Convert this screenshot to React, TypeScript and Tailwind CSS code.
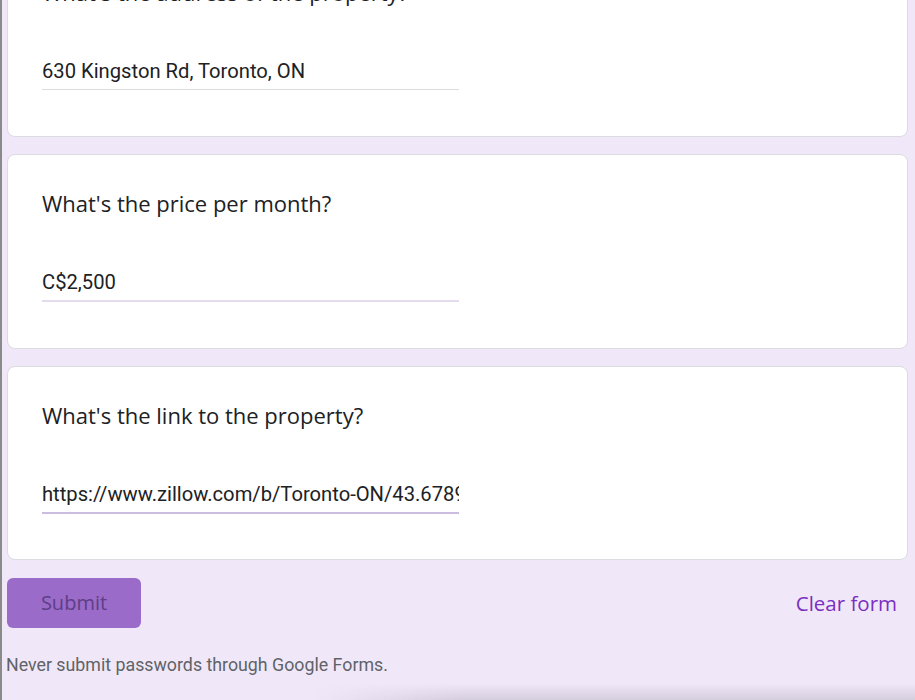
const questionFont = { fontFamily: '"Open Sans", "Noto Sans", sans-serif' };

type Question = {
  title: string;
  answer: string;
  lineClass: string;
  bottom: string;
};

const questions: Question[] = [
  {
    title: "What's the address of the property?",
    answer: "630 Kingston Rd, Toronto, ON",
    lineClass: "border-b border-[#dadce0]",
    bottom: "pb-[46px]",
  },
  {
    title: "What's the price per month?",
    answer: "C$2,500",
    lineClass: "border-b-2 border-[#e4dcee]",
    bottom: "pb-[46px]",
  },
  {
    title: "What's the link to the property?",
    answer: "https://www.zillow.com/b/Toronto-ON/43.67891,-79.29145_ll/",
    lineClass: "border-b-2 border-[#cbbde0]",
    bottom: "pb-[45px]",
  },
];

function QuestionCard({ q, first }: { q: Question; first?: boolean }) {
  return (
    <div
      className={`rounded-lg border border-[#dadce0] bg-white px-[34px] pt-[34px] ${q.bottom} ${
        first ? "-mt-[57px]" : ""
      }`}
    >
      <div className="text-[22px] leading-[28px] text-[#202124]" style={questionFont}>
        {q.title}
      </div>
      <div className={`mt-[53px] w-[417px] pb-[6px] ${q.lineClass}`}>
        <div className="overflow-hidden whitespace-nowrap font-['Roboto'] text-[20.2px] leading-[24px] text-[#202124]">
          {q.answer}
        </div>
      </div>
    </div>
  );
}

export default function App() {
  return (
    <div className="relative h-[700px] w-[915px] overflow-hidden border-l-2 border-[#8a8a8a] bg-[#f0e8f8] pl-[5px] pr-[7px] font-['Roboto']">
      <div className="flex flex-col gap-[17px]">
        {questions.map((q, i) => (
          <QuestionCard key={q.title} q={q} first={i === 0} />
        ))}
      </div>

      <div className="mt-[18px] flex items-center justify-between">
        <button
          className="h-[50px] w-[134px] rounded-md bg-[#9a6bc9] text-[20px] font-medium text-[#5e3e85]"
          style={questionFont}
        >
          Submit
        </button>
        <button
          className="mr-[11px] text-[20.5px] font-medium text-[#7a2fc0]"
          style={questionFont}
        >
          Clear form
        </button>
      </div>

      <div className="-ml-[1px] mt-[25px] text-[17.8px] leading-[24px] text-[#5f6368]">
        Never submit passwords through Google Forms.
      </div>

      <div className="pointer-events-none absolute bottom-0 right-0 h-[16px] w-[600px] bg-gradient-to-t from-[#d4cddd] to-transparent [mask-image:linear-gradient(to_right,transparent,black_25%)]" />
    </div>
  );
}
